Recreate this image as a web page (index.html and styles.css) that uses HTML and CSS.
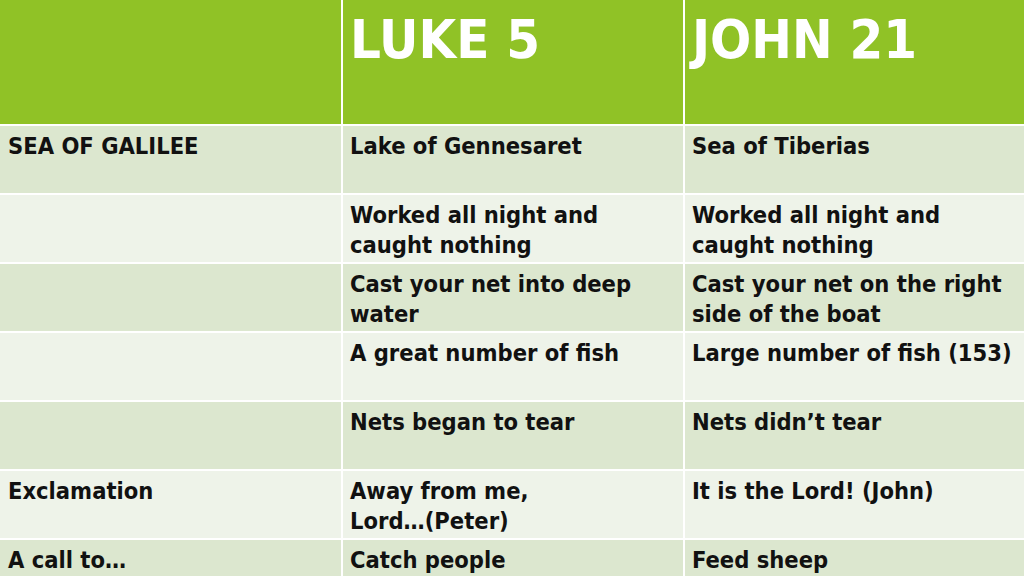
FILE: index.html
```html
<!DOCTYPE html>
<html>
<head>
<meta charset="utf-8">
<link rel="stylesheet" href="styles.css">
</head>
<body>
<div class="table">
  <div class="cell head"></div>
  <div class="cell head">LUKE 5</div>
  <div class="cell head">JOHN 21</div>

  <div class="cell dark">SEA OF GALILEE</div>
  <div class="cell dark">Lake of Gennesaret</div>
  <div class="cell dark">Sea of Tiberias</div>

  <div class="cell light"></div>
  <div class="cell light">Worked all night and caught nothing</div>
  <div class="cell light">Worked all night and caught nothing</div>

  <div class="cell dark"></div>
  <div class="cell dark">Cast your net into deep water</div>
  <div class="cell dark">Cast your net on the right side of the boat</div>

  <div class="cell light"></div>
  <div class="cell light">A great number of fish</div>
  <div class="cell light">Large number of fish (153)</div>

  <div class="cell dark"></div>
  <div class="cell dark">Nets began to tear</div>
  <div class="cell dark">Nets didn’t tear</div>

  <div class="cell light">Exclamation</div>
  <div class="cell light">Away from me, <span class="nowrap">Lord…(Peter)</span></div>
  <div class="cell light">It is the Lord! (John)</div>

  <div class="cell dark">A call to…</div>
  <div class="cell dark">Catch people</div>
  <div class="cell dark">Feed sheep</div>
</div>
</body>
</html>
```

FILE: styles.css
```css
html, body {
  margin: 0;
  padding: 0;
  width: 1024px;
  height: 576px;
  overflow: hidden;
  background: #ffffff;
}
.table {
  display: grid;
  grid-template-columns: 341px 340px 339px;
  grid-template-rows: 124px repeat(6, 67px) 36px;
  column-gap: 2px;
  row-gap: 2px;
  font-family: "DejaVu Sans Condensed", "DejaVu Sans", sans-serif;
  font-weight: bold;
  color: #111111;
}
.cell {
  padding: 5px 7px 0 7px;
  font-size: 23.5px;
  line-height: 30px;
  box-sizing: border-box;
  overflow: hidden;
}
.cell:nth-child(3n+1) {
  padding-left: 8px;
}
.nowrap {
  white-space: nowrap;
}
.head {
  background: #90c226;
  color: #ffffff;
  font-size: 54px;
  line-height: 62px;
  padding-top: 9px;
}
.dark {
  background: #dce7cf;
}
.light {
  background: #eef3e9;
}
```
